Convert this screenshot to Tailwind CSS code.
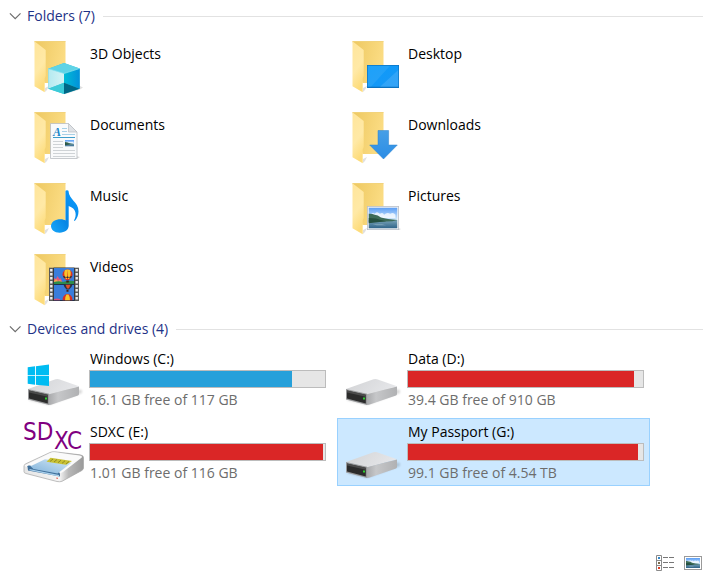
<!DOCTYPE html>
<html lang="en">
<head>
    <meta charset="UTF-8">
    <meta name="viewport" content="width=device-width, initial-scale=1.0">
    <title>This PC</title>
    <script src="https://cdn.jsdelivr.net/npm/@tailwindcss/browser@4"></script>
</head>
<body class="min-h-screen flex flex-col bg-white text-black text-[14px] leading-5 font-['Open_Sans','Noto_Sans',sans-serif]">

    <!-- Shared icon parts -->
    <svg class="absolute size-0" aria-hidden="true">
        <defs>
            <linearGradient id="folderBack" x1="0" y1="0" x2="1" y2="0.3"><stop offset="0" stop-color="#edc861"/><stop offset="1" stop-color="#fbdc83"/></linearGradient>
            <linearGradient id="folderFlap" x1="0" y1="0" x2="0.3" y2="1"><stop offset="0" stop-color="#ffe59b"/><stop offset="0.6" stop-color="#ffe9a6"/><stop offset="1" stop-color="#fddc7c"/></linearGradient>
            <linearGradient id="driveTop" x1="0" y1="0" x2="1" y2="0.3"><stop offset="0" stop-color="#d2d3d5"/><stop offset="1" stop-color="#e5e6e9"/></linearGradient>
            <linearGradient id="driveSide" x1="0" y1="0" x2="1" y2="0"><stop offset="0" stop-color="#a9aaac"/><stop offset="0.3" stop-color="#c6c7c9"/><stop offset="1" stop-color="#b0b1b3"/></linearGradient>
            <linearGradient id="screen" x1="0" y1="0" x2="1" y2="1"><stop offset="0" stop-color="#0a9bfa"/><stop offset="1" stop-color="#1a97f5"/></linearGradient>
            <linearGradient id="note" x1="0" y1="1" x2="1" y2="0"><stop offset="0" stop-color="#18a8fa"/><stop offset="0.4" stop-color="#0786e4"/><stop offset="1" stop-color="#0a9cff"/></linearGradient>
            <linearGradient id="arrow" x1="0" y1="0" x2="0" y2="1"><stop offset="0" stop-color="#469fe6"/><stop offset="1" stop-color="#2b8de6"/></linearGradient>
            <linearGradient id="sky" x1="0" y1="0" x2="0" y2="1"><stop offset="0" stop-color="#5a9df5"/><stop offset="1" stop-color="#e2f3fc"/></linearGradient>
            <linearGradient id="lake" x1="0" y1="0" x2="0" y2="1"><stop offset="0" stop-color="#7aa4b8"/><stop offset="1" stop-color="#2d6287"/></linearGradient>
            <linearGradient id="cubeLeft" x1="0" y1="0" x2="1" y2="0"><stop offset="0" stop-color="#b4eaf0"/><stop offset="1" stop-color="#d5f3f5"/></linearGradient>
            <linearGradient id="cubeRight" x1="0" y1="0" x2="1" y2="0"><stop offset="0" stop-color="#00bcd6"/><stop offset="1" stop-color="#0290da"/></linearGradient>
            <linearGradient id="readerSide" x1="0" y1="0" x2="1" y2="0"><stop offset="0" stop-color="#e6e6e6"/><stop offset="0.6" stop-color="#f4f4f4"/><stop offset="0.75" stop-color="#b8b8b8"/><stop offset="1" stop-color="#9a9a9a"/></linearGradient>
            <linearGradient id="card" x1="0" y1="1" x2="1" y2="0"><stop offset="0" stop-color="#7fb2da"/><stop offset="1" stop-color="#d5e8f6"/></linearGradient>
            <filter id="soft" x="-20%" y="-50%" width="140%" height="200%"><feGaussianBlur stdDeviation="1"/></filter>
        </defs>
        <symbol id="folder" viewBox="0 0 64 64">
            <path d="M23 52l4-2-2 4-2 2z" fill="#000" opacity=".12"/>
            <path d="M12.5 5.3h31V47h-21z" fill="url(#folderBack)"/>
            <path d="M12.5 5.5h31" stroke="#f0cf73" stroke-width=".8"/>
            <path d="M12.5 5.3L23.7 14v26l-1 2.5V56.3L12.5 50.3z" fill="url(#folderFlap)"/>
        </symbol>
        <symbol id="drive" viewBox="0 0 64 64">
            <path d="M27 58L60 46v-3L40 40 6 53z" fill="#000" opacity=".15" filter="url(#soft)"/>
            <path d="M6 42L33.500 32.300q1.500-.5 3.500-.1L57 39.300 27 47.500z" fill="url(#driveTop)"/>
            <path d="M27 47.300L57 39.500V47q0 1-1 1.400L29 57.700l-2 .3z" fill="url(#driveSide)"/>
            <path d="M6 42l21 4.800V58L6 52.500z" fill="#97989a"/>
            <path d="M7 43.500l18.800 4.300v8.700L7 51.500z" fill="#2b2b2b"/>
            <path d="M7 43.500l18.800 4.300v2L7 45.500z" fill="#4b4b4b"/>
            <rect x="23" y="50.500" width="2" height="2" fill="#2fd12f"/>
        </symbol>
        <symbol id="landscape" viewBox="0 0 28 20" preserveAspectRatio="none">
            <path d="M0 0h28v13H0z" fill="url(#sky)"/>
            <path d="M2 7q2-3 4-1 2-3 5 0 3-2 4 1 3-3 6-1 3-2 5 1v3H2z" fill="#fff" opacity=".75"/>
            <path d="M0 12h28v8H0z" fill="url(#lake)"/>
            <path d="M0 6q3-.5 6 1 3 0 6 2.500Q18 11 28 12l-5 1-23 1z" fill="#3d6b57"/>
            <path d="M0 10q8 0 12 2l5 1-17 2z" fill="#25503f"/>
            <path d="M4 16h9l4 1h-9z" fill="#b6d2dc" opacity=".5"/>
        </symbol>
        <symbol id="balloons" viewBox="0 0 20 16">
            <path d="M0 0h20v16H0z" fill="#3a7ddb"/>
            <path d="M0 14v-4l2 1 1.500-3 2 3 1-1 1.500 3v1z" fill="#e0587c"/>
            <path d="M0 13l2-2 2 2 2-1 2 2H0z" fill="#f6a44d"/>
            <path d="M0 14q5-1.500 9 0 6-2 11-1v3H0z" fill="#2d8d4c"/>
            <path d="M8.500 6.500a5 5 0 0 1 10 0q0 2.500-3.500 5.500h-3q-3.500-3-3.500-5.500z" fill="#d93025"/>
            <path d="M11 2q-2 4 1 9h1l.500-9.500zM16 2q2 4-1 9h-1L13.500 1.500z" fill="#f7c52b"/>
            <path d="M9 8h9l-1 2h-7z" fill="#30313a"/>
            <path d="M10.500 8l1.500 2 1.500-2 1.500 2 1.500-2z" fill="#f7a928"/>
            <path d="M12.300 12.500h2.500v2h-2.500z" fill="#412315"/>
        </symbol>
    </svg>

    <main class="grow">
        <!-- Folders -->
        <section>
            <h2 class="flex h-8 items-center gap-2 pl-[9px] pr-2 text-[#1e3287]">
                <button type="button" aria-expanded="true" class="flex items-center gap-[6px]">
                    <svg class="w-3 h-3" viewBox="0 0 12 12" fill="none" stroke="#6d6d6d" stroke-width="1.2"><path d="M.9 3.300L6.200 8.600l5.300-5.300"/></svg>
                    Folders (7)
                </button>
                <span class="h-px grow bg-[#e2e2e2]"></span>
            </h2>
            <ul class="grid grid-cols-[repeat(auto-fill,313px)] gap-[5px] pl-[19px] pt-0.5">
                <li>
                    <button type="button" class="flex w-full h-[66px] items-start gap-[3px] border border-transparent pl-0.5 pt-px text-left hover:bg-[#e5f3ff]">
                        <svg class="size-16 shrink-0" viewBox="0 0 64 64">
                            <use href="#folder"/>
                            <path d="M42 58.500l16-5 3-2-4-2z" fill="#000" opacity=".12"/>
                            <path d="M26.300 32.700L42 27l15.700 5.500v20.200L42 58l-15.700-5.300z" fill="#35c3d9"/>
                            <path d="M26.300 32.700L42 27l15.700 5.500L42 37.500z" fill="#5fd3e6"/>
                            <path d="M26.300 32.700L42 37.500v9.300l-15.700 5.900z" fill="url(#cubeLeft)"/>
                            <path d="M42 37.500l15.700-5v20.200L42 46.800z" fill="url(#cubeRight)"/>
                            <path d="M26.300 52.700L42 46.800V58z" fill="#3ccbd8"/>
                            <path d="M42 46.800l15.700 5.900L42 58z" fill="#006786"/>
                            <path d="M26.300 32.700L42 37.500l15.700-5" fill="none" stroke="#8ce4ef" stroke-width=".7"/>
                        </svg>
                        <span class="px-px pt-2">3D Objects</span>
                    </button>
                </li>
                <li>
                    <button type="button" class="flex w-full h-[66px] items-start gap-[3px] border border-transparent pl-0.5 pt-px text-left hover:bg-[#e5f3ff]">
                        <svg class="size-16 shrink-0" viewBox="0 0 64 64">
                            <use href="#folder"/>
                            <rect x="27" y="29" width="32" height="23" fill="#0b72c0"/>
                            <rect x="27.700" y="29.700" width="30.600" height="21" fill="url(#screen)"/>
                            <path d="M27.700 29.700H50L31 50.700h-3.300z" fill="#fff" opacity=".08"/>
                            <path d="M58.300 34v16.700H40z" fill="#fff" opacity=".12"/>
                        </svg>
                        <span class="px-px pt-2">Desktop</span>
                    </button>
                </li>
                <li>
                    <button type="button" class="flex w-full h-[66px] items-start gap-[3px] border border-transparent pl-0.5 pt-px text-left hover:bg-[#e5f3ff]">
                        <svg class="size-16 shrink-0" viewBox="0 0 64 64">
                            <use href="#folder"/>
                            <path d="M54 49l4 1-3 2z" fill="#000" opacity=".15"/>
                            <path d="M28.500 16.500h18l8.500 8.500v26.500H28.500z" fill="#f9fafb" stroke="#b9bdc2" stroke-width=".8"/>
                            <path d="M46.500 16.500V25H55z" fill="#dfe2e6" stroke="#b9bdc2" stroke-width=".7"/>
                            <text x="31" y="28.500" font-family="Liberation Serif, serif" font-size="12" font-weight="bold" font-style="italic" fill="#1b87c9">A</text>
                            <path d="M40 21.500h5M40 24.500h5M40 27.500h13" stroke="#a7d0e6" stroke-width="1"/>
                            <path d="M31 30.500h22" stroke="#3e9dcb" stroke-width="1"/>
                            <path d="M31 34.500h10M31 37.500h10M31 40.500h10M31 43.500h22M31 46.500h22M31 49.500h22" stroke="#cfd3d6" stroke-width="1"/>
                            <use href="#landscape" x="43" y="33" width="9" height="6.500"/>
                        </svg>
                        <span class="px-px pt-2">Documents</span>
                    </button>
                </li>
                <li>
                    <button type="button" class="flex w-full h-[66px] items-start gap-[3px] border border-transparent pl-0.5 pt-px text-left hover:bg-[#e5f3ff]">
                        <svg class="size-16 shrink-0" viewBox="0 0 64 64">
                            <use href="#folder"/>
                            <path d="M38 23.500h10.600V38h8.700L43.500 52 29.700 38H38z" fill="url(#arrow)" stroke="#2b80cc" stroke-width=".5"/>
                        </svg>
                        <span class="px-px pt-2">Downloads</span>
                    </button>
                </li>
                <li>
                    <button type="button" class="flex w-full h-[66px] items-start gap-[3px] border border-transparent pl-0.5 pt-px text-left hover:bg-[#e5f3ff]">
                        <svg class="size-16 shrink-0" viewBox="0 0 64 64">
                            <use href="#folder"/>
                            <path d="M43.500 13q0-.8 1.500-.8t1.500.8c.5 9 10 10.500 10 20.500 0 4-1.500 7-3.700 9.500l-.8-.5c3-5 2.500-12-5.300-14.500v19.500c0 4.500-4 7-9 7.200-5.500 0-8.700-3-8.700-6.700 0-4.300 4.500-6.800 9.500-6.800 2.200 0 4 .6 5 1.300z" fill="url(#note)"/>
                        </svg>
                        <span class="px-px pt-2">Music</span>
                    </button>
                </li>
                <li>
                    <button type="button" class="flex w-full h-[66px] items-start gap-[3px] border border-transparent pl-0.5 pt-px text-left hover:bg-[#e5f3ff]">
                        <svg class="size-16 shrink-0" viewBox="0 0 64 64">
                            <use href="#folder"/>
                            <path d="M58 50l3 1-2 1z" fill="#000" opacity=".15"/>
                            <rect x="27.400" y="28.400" width="31.200" height="23.200" fill="#f4f5f6" stroke="#b9c0c9" stroke-width=".8"/>
                            <use href="#landscape" x="28.500" y="29.500" width="29" height="21"/>
                        </svg>
                        <span class="px-px pt-2">Pictures</span>
                    </button>
                </li>
                <li>
                    <button type="button" class="flex w-full h-[66px] items-start gap-[3px] border border-transparent pl-0.5 pt-px text-left hover:bg-[#e5f3ff]">
                        <svg class="size-16 shrink-0" viewBox="0 0 64 64">
                            <use href="#folder"/>
                            <rect x="27" y="18.700" width="30" height="33.300" fill="#5a5a5a"/>
                            <path d="M29.300 20v32M54.700 20v32" stroke="#ececec" stroke-width="2.400" stroke-dasharray="2.400 1.600"/>
                            <rect x="31.500" y="18.700" width="21" height="33.300" fill="#16181c"/>
                            <use href="#balloons" x="32" y="19" width="20" height="16"/>
                            <svg x="32" y="35.500" width="20" height="16" viewBox="0 0 20 16">
                                <path d="M0 0h20v16H0z" fill="#3a7ddb"/>
                                <path d="M9.500 0h9q-.5 3-3.500 5h-2.500Q10 3 9.500 0z" fill="#30313a"/>
                                <path d="M11.500 0h5l-1.500 4h-2z" fill="#e0502b"/>
                                <path d="M12.500 5.500h2v1.700h-2z" fill="#412315"/>
                                <path d="M0 14.500q3-1 6 0V16H0z" fill="#d8507c"/>
                                <path d="M8.500 16q0-6 5-6.500 5 .5 5 6.500z" fill="#d93025"/>
                                <path d="M11 16q0-4 1.500-6h2q1.500 2 1.500 6z" fill="#f7c52b"/>
                            </svg>
                        </svg>
                        <span class="px-px pt-2">Videos</span>
                    </button>
                </li>
            </ul>
        </section>

        <!-- Devices and drives -->
        <section>
            <h2 class="flex h-8 items-center gap-2 pl-[9px] pr-2 text-[#1e3287]">
                <button type="button" aria-expanded="true" class="flex items-center gap-[6px]">
                    <svg class="w-3 h-3" viewBox="0 0 12 12" fill="none" stroke="#6d6d6d" stroke-width="1.2"><path d="M.9 3.300L6.200 8.600l5.300-5.300"/></svg>
                    Devices and drives (4)
                </button>
                <span class="h-px grow bg-[#e2e2e2]"></span>
            </h2>
            <ul class="grid grid-cols-[repeat(auto-fill,313px)] gap-[5px] pl-[19px]">
                <li>
                    <button type="button" class="flex w-full h-[68px] items-start gap-[3px] border border-transparent pl-0.5 pr-[5px] pt-px text-left hover:bg-[#e5f3ff]">
                        <svg class="size-16 shrink-0" viewBox="0 0 64 64">
                            <use href="#drive"/>
                            <path d="M5.700 20.300l7.300-1v9H5.700zM13.900 19.200L27 17.500v10.800H13.900zM5.700 29.100H13v8.700l-7.300-1zM13.900 29.100H27V39l-13.100-1.300z" fill="#00bcf2"/>
                        </svg>
                        <span class="flex grow flex-col pt-0.5">
                            <span class="px-px">Windows (C:)</span>
                            <span role="meter" aria-label="Space used" aria-valuenow="86" class="mt-px block h-[18px] border border-[#bcbcbc] bg-[#e6e6e6]"><span class="block h-full bg-[#26a0da]" style="width: 86%"></span></span>
                            <span class="mt-0.5 px-px text-[#6d6d6d]">16.1 GB free of 117 GB</span>
                        </span>
                    </button>
                </li>
                <li>
                    <button type="button" class="flex w-full h-[68px] items-start gap-[3px] border border-transparent pl-0.5 pr-[5px] pt-px text-left hover:bg-[#e5f3ff]">
                        <svg class="size-16 shrink-0" viewBox="0 0 64 64"><use href="#drive"/></svg>
                        <span class="flex grow flex-col pt-0.5">
                            <span class="px-px">Data (D:)</span>
                            <span role="meter" aria-label="Space used" aria-valuenow="96" class="mt-px block h-[18px] border border-[#bcbcbc] bg-[#e6e6e6]"><span class="block h-full bg-[#da2626]" style="width: 96%"></span></span>
                            <span class="mt-0.5 px-px text-[#6d6d6d]">39.4 GB free of 910 GB</span>
                        </span>
                    </button>
                </li>
                <li>
                    <button type="button" class="flex w-full h-[68px] items-start gap-[3px] border border-transparent pl-0.5 pr-[5px] pt-px text-left hover:bg-[#e5f3ff]">
                        <svg class="size-16 shrink-0" viewBox="0 0 64 64">
                            <g font-family="DejaVu Sans Condensed, Liberation Sans, sans-serif" font-size="24" fill="#800080">
                                <text x="1" y="20">SD</text>
                                <text x="32" y="29">XC</text>
                            </g>
                            <path d="M2 46q0-1.500 2-2.300l24-11.200q2-1 5-.7l25 3q3.500.6 3.500 2.700V48q0 1.500-2 2.700L40 61.300q-2 .8-5 .2L4 53.500q-2-.5-2-2z" fill="url(#readerSide)" stroke="#a5a5a5" stroke-width=".7"/>
                            <path d="M2.500 45.500l26-12.500q2-1 5-.6L58 35.500q3 .7 1.500 2.300L41 52q-2 1.500-4 1L5 47q-2-.5-2.500-1.500z" fill="#fafafa"/>
                            <path d="M5.500 46.300q0-1 2-.8l29 6.500q1.500.4 1.500 2v2.500L6 50.500z" fill="#3f6f9a"/>
                            <path d="M8.500 46.200L23 39.300l26.500 3.500-14 10.700-24-4.500z" fill="url(#card)"/>
                            <path d="M28.500 37.800L50 41l-6 3.800-19.500-3z" fill="#c9c234"/>
                            <path d="M31 39l-3 2.500M35 39.500l-3 2.500M39 40.200l-3 2.500M43 40.800l-3 2.500M47 41.500l-3 2.500" stroke="#77731e" stroke-width=".7"/>
                            <path d="M7.500 49l29.500 6v1.500L7.500 50.300z" fill="#a9d0ec"/>
                            <path d="M34.500 57.500l1.200.2v1.300l-1.200-.2z" fill="#e23b2e"/>
                        </svg>
                        <span class="flex grow flex-col pt-0.5">
                            <span class="px-px">SDXC (E:)</span>
                            <span role="meter" aria-label="Space used" aria-valuenow="99" class="mt-px block h-[18px] border border-[#bcbcbc] bg-[#e6e6e6]"><span class="block h-full bg-[#da2626]" style="width: 99%"></span></span>
                            <span class="mt-0.5 px-px text-[#6d6d6d]">1.01 GB free of 116 GB</span>
                        </span>
                    </button>
                </li>
                <li>
                    <button type="button" aria-pressed="true" class="flex w-full h-[68px] items-start gap-[3px] border border-[#99d1ff] bg-[#cce8ff] pl-0.5 pr-[5px] pt-px text-left">
                        <svg class="size-16 shrink-0" viewBox="0 0 64 64"><use href="#drive"/></svg>
                        <span class="flex grow flex-col pt-0.5">
                            <span class="px-px">My Passport (G:)</span>
                            <span role="meter" aria-label="Space used" aria-valuenow="98" class="mt-px block h-[18px] border border-[#bcbcbc] bg-[#e6e6e6]"><span class="block h-full bg-[#da2626]" style="width: 98%"></span></span>
                            <span class="mt-0.5 px-px text-[#6d6d6d]">99.1 GB free of 4.54 TB</span>
                        </span>
                    </button>
                </li>
            </ul>
        </section>
    </main>

    <!-- View switcher -->
    <footer class="flex justify-end gap-[10px] pb-[7px] pr-[9px]">
        <button type="button" aria-label="Details view">
            <svg class="block h-4 w-[18px]" viewBox="0 0 18 16" fill="none">
                <path d="M.500.500h5v15h-5zM.500 5.500h5M.500 10.500h5" stroke="#8a8a8a"/>
                <path d="M2 2h2v2H2z" fill="#2f86c8"/>
                <path d="M2 7h2v2H2z" fill="#7a6a4a"/>
                <path d="M2 12h2v2H2z" fill="#e03a1e"/>
                <path d="M7 2.500h5M13 2.500h5M7 7.500h5M13 7.500h5M7 12.500h5M13 12.500h5" stroke="#777"/>
            </svg>
        </button>
        <button type="button" aria-label="Large icons view">
            <svg class="block h-4 w-[18px]" viewBox="0 0 18 16">
                <rect x=".5" y="1.500" width="17" height="13" fill="#fff" stroke="#9a9a9a"/>
                <use href="#landscape" x="2" y="3" width="14" height="10"/>
            </svg>
        </button>
    </footer>
</body>
</html>
